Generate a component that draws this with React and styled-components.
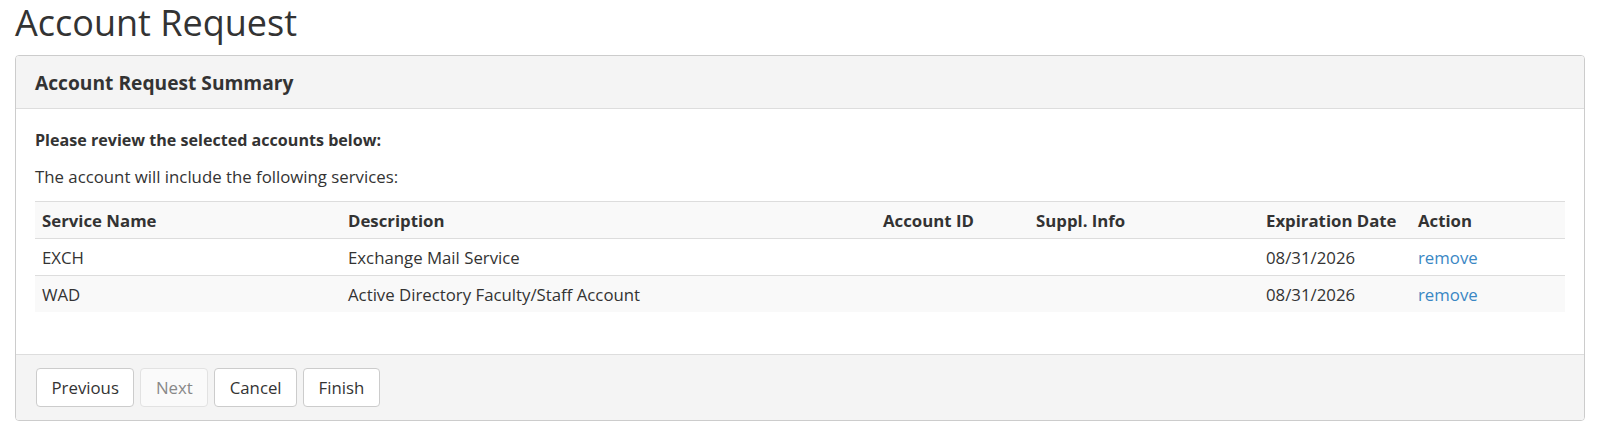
import React from 'react';
import styled, { createGlobalStyle } from 'styled-components';

const GlobalStyle = createGlobalStyle`
  body {
    margin: 0;
    font-family: "Open Sans", "Liberation Sans", sans-serif;
    color: #333;
    background: #fff;
  }
`;

const Page = styled.div`
  padding: 0 15px;
`;

const Title = styled.h1`
  margin: 0 0 10px;
  font-size: 36px;
  font-weight: 400;
  line-height: 45px;
  color: #333;
`;

const Panel = styled.div`
  border: 1px solid #ccc;
  border-radius: 4px;
  overflow: hidden;
`;

const PanelHeading = styled.div`
  background: #f4f4f4;
  border-bottom: 1px solid #ddd;
  padding: 0 19px;
  height: 52px;
  display: flex;
  align-items: center;
  font-size: 19.2px;
  font-weight: 700;
`;

const PanelBody = styled.div`
  padding: 20px 19px 42px;
`;

const Lead = styled.p`
  margin: 0 0 ${(p) => p.mb}px;
  font-size: ${(p) => (p.bold ? 16.1 : 16.8)}px;
  font-weight: ${(p) => (p.bold ? 700 : 400)};
  line-height: 22px;
`;

const Table = styled.table`
  width: 100%;
  border-collapse: collapse;
  table-layout: fixed;
  font-size: 16.8px;
`;

const Row = styled.tr`
  background: ${(p) => (p.shade ? '#f9f9f9' : '#fff')};
  border-top: 1px solid #ddd;
`;

const Th = styled.th`
  text-align: left;
  font-weight: 700;
  padding: 0 7px;
  height: 36px;
  width: ${(p) => p.w - 14}px;
  white-space: nowrap;
`;

const Td = styled.td`
  padding: 0 7px;
  height: 36px;
  white-space: nowrap;
`;

const Link = styled.a`
  color: #3a87c4;
  text-decoration: none;
  cursor: pointer;
`;

const PanelFooter = styled.div`
  background: #f4f4f4;
  border-top: 1px solid #ddd;
  padding: 13px 20px;
  display: flex;
  gap: 6px;
`;

const Button = styled.button`
  font-family: inherit;
  font-size: 16.8px;
  color: ${(p) => (p.disabled ? '#888' : '#333')};
  background: ${(p) => (p.disabled ? '#fafafa' : '#fff')};
  border: 1px solid ${(p) => (p.disabled ? '#e2e2e2' : '#ccc')};
  border-radius: 4px;
  height: 39px;
  padding: 0 14.5px;
  cursor: ${(p) => (p.disabled ? 'default' : 'pointer')};
`;

// widths include the 7px cell padding on each side
const cols = [
  ['Service Name', 306],
  ['Description', 535],
  ['Account ID', 153],
  ['Suppl. Info', 230],
  ['Expiration Date', 152],
  ['Action', 154],
];

const rows = [
  { name: 'EXCH', desc: 'Exchange Mail Service', date: '08/31/2026' },
  { name: 'WAD', desc: 'Active Directory Faculty/Staff Account', date: '08/31/2026' },
];

export default function App() {
  return (
    <Page>
      <GlobalStyle />
      <Title>Account Request</Title>
      <Panel>
        <PanelHeading>Account Request Summary</PanelHeading>
        <PanelBody>
          <Lead bold mb={15}>Please review the selected accounts below:</Lead>
          <Lead mb={13}>The account will include the following services:</Lead>
          <Table>
            <thead>
              <Row shade>
                {cols.map(([label, w]) => (
                  <Th key={label} w={w}>{label}</Th>
                ))}
              </Row>
            </thead>
            <tbody>
              {rows.map((r, i) => (
                <Row key={r.name} shade={i % 2 === 1}>
                  <Td>{r.name}</Td>
                  <Td>{r.desc}</Td>
                  <Td></Td>
                  <Td></Td>
                  <Td>{r.date}</Td>
                  <Td><Link>remove</Link></Td>
                </Row>
              ))}
            </tbody>
          </Table>
        </PanelBody>
        <PanelFooter>
          <Button>Previous</Button>
          <Button disabled>Next</Button>
          <Button>Cancel</Button>
          <Button>Finish</Button>
        </PanelFooter>
      </Panel>
    </Page>
  );
}
